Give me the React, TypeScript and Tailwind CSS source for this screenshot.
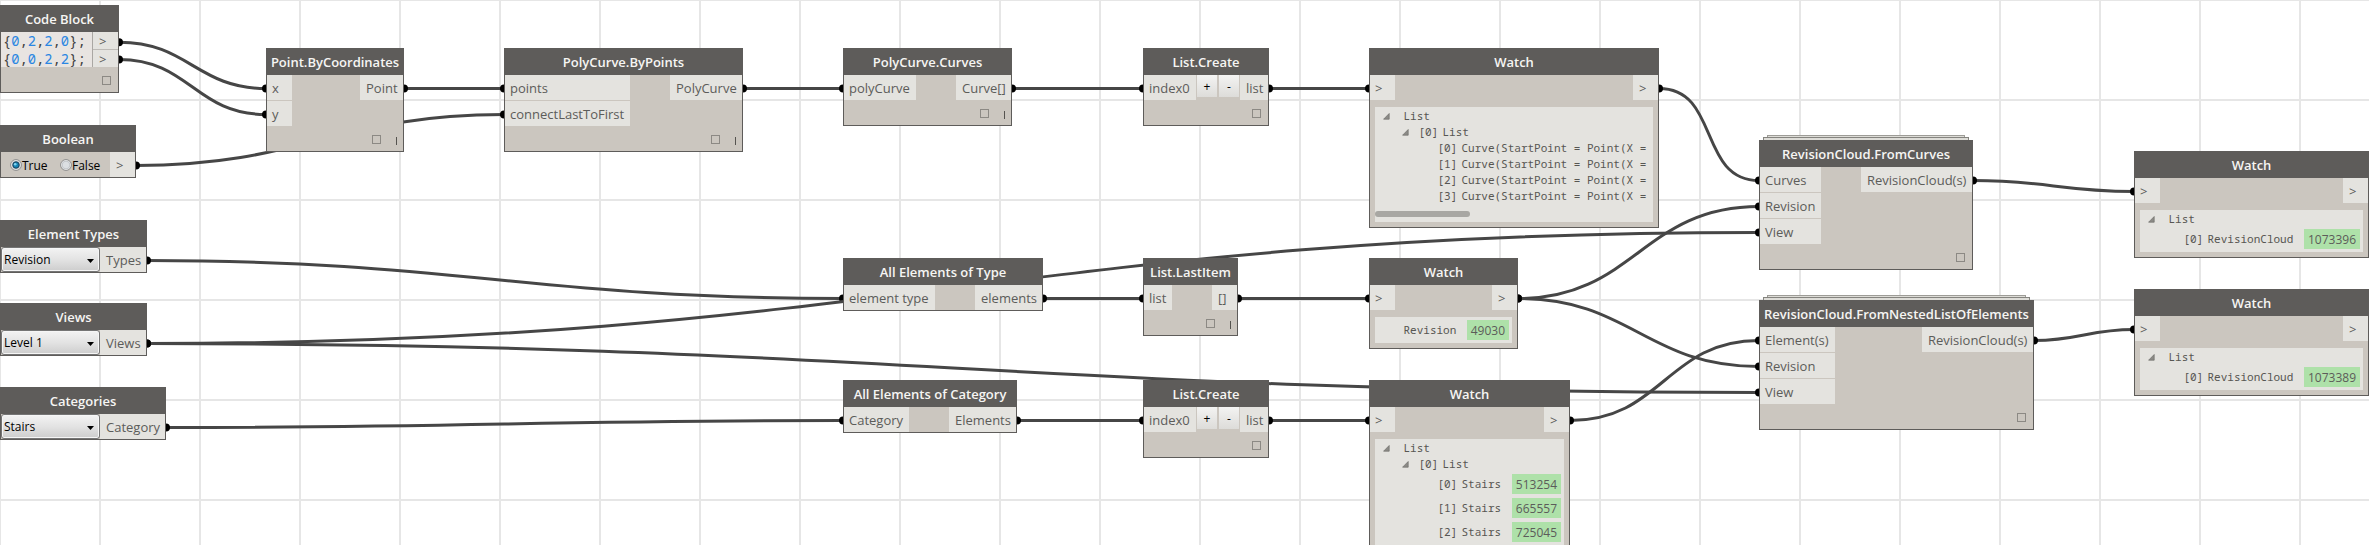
import type { ReactNode } from "react";

type Point = [number, number];

const WIRES: [Point, Point][] = [
  [[119, 42.2], [266, 88.5]],
  [[119, 59.4], [266, 114.5]],
  [[136, 165.5], [504, 114.5]],
  [[404, 88.5], [504, 88.5]],
  [[743, 88.5], [843, 88.5]],
  [[1012, 88.5], [1143, 88.5]],
  [[1269, 88.5], [1369, 88.5]],
  [[1659, 88.5], [1759, 180.5]],
  [[147, 260.5], [843, 298.5]],
  [[147, 343.5], [1759, 232.5]],
  [[147, 343.5], [1759, 392.5]],
  [[166, 427.5], [843, 420.5]],
  [[1043, 298.5], [1143, 298.5]],
  [[1238, 298.5], [1369, 298.5]],
  [[1518, 298.5], [1759, 206.5]],
  [[1518, 298.5], [1759, 366.5]],
  [[1017, 420.5], [1143, 420.5]],
  [[1269, 420.5], [1369, 420.5]],
  [[1570, 420.5], [1759, 340.5]],
  [[1973, 180.5], [2134, 191.5]],
  [[2034, 340.5], [2134, 329.5]],
];

function wirePath([[x1, y1], [x2, y2]]: [Point, Point]) {
  const o = 0.45 * Math.hypot(x2 - x1, y2 - y1);
  return `M${x1} ${y1}C${x1 + o} ${y1} ${x2 - o} ${y2} ${x2} ${y2}`;
}

function Wires() {
  return (
    <svg className="absolute left-0 top-0" width="2369" height="545" fill="none">
      {WIRES.map((w, i) => (
        <g key={i}>
          <path d={wirePath(w)} stroke="#464646" strokeWidth="3" />
          <circle cx={w[0][0]} cy={w[0][1]} r="4" fill="#000" />
          <circle cx={w[1][0]} cy={w[1][1]} r="4" fill="#000" />
        </g>
      ))}
    </svg>
  );
}

function Node({ at, title, stacked, children }: { at: string; title: string; stacked?: boolean; children: ReactNode }) {
  return (
    <section className={`absolute ${at}`}>
      {stacked && (
        <>
          <div className="absolute inset-x-2 -top-[5px] h-[5px] border border-b-0 border-[#9d9c97] bg-[#dddcd7]" />
          <div className="absolute inset-x-1 -top-[3px] h-[3px] border border-b-0 border-[#85847f] bg-[#dddcd7]" />
        </>
      )}
      <div className="relative flex flex-col border border-t-0 border-[#5e5c5a] bg-[#cbc6bf]">
        <h2 className="-mx-px flex h-[27px] items-center justify-center whitespace-nowrap bg-[#5e5c5a] pt-px text-[13px] font-semibold leading-[26px] text-[#f6f5f3]">
          {title}
        </h2>
        {children}
      </div>
    </section>
  );
}

function In({ w, children }: { w: string; children: ReactNode }) {
  return <div className={`h-[25px] whitespace-nowrap bg-[#e4e3df] pl-[5px] text-[13px] leading-[26px] text-[#5c5c5a] ${w}`}>{children}</div>;
}

function Out({ w, children }: { w: string; children: ReactNode }) {
  return <div className={`h-[25px] whitespace-nowrap bg-[#e4e3df] pl-[6px] text-[13px] leading-[26px] text-[#5c5c5a] ${w}`}>{children}</div>;
}

function Ports({ ins, inW, out, outW }: { ins: string[]; inW: string; out: string; outW: string }) {
  return (
    <div className="flex items-start justify-between">
      <div className="flex flex-col gap-px">
        {ins.map((name) => (
          <In key={name} w={inW}>{name}</In>
        ))}
      </div>
      <Out w={outW}>{out}</Out>
    </div>
  );
}

function Footer({ lacing }: { lacing?: boolean }) {
  return (
    <div className={`flex h-[25px] items-end justify-end pb-[7px] ${lacing ? "pr-[6px]" : "pr-[7px]"}`}>
      <div className="size-[9px] border border-[#8c8984]" />
      {lacing && <div className="-mb-px ml-[15px] h-2 w-px bg-[#55534f]" />}
    </div>
  );
}

function ListCreate({ at }: { at: string }) {
  const btn = "h-[22px] w-5 bg-linear-to-b from-[#f3f3f2] to-[#dddcd9] text-center text-[12px] leading-[24px] text-black";
  return (
    <Node at={at} title="List.Create">
      <div className="flex items-start">
        <In w="w-[52px]">index0</In>
        <button className={`${btn} ml-px`}>+</button>
        <button className={`${btn} ml-[2px]`}>-</button>
        <div className="ml-px">
          <Out w="w-[28px]">list</Out>
        </div>
      </div>
      <Footer />
    </Node>
  );
}

type Item = { level: 0 | 1 | 2; index?: number; label: string; open?: boolean; id?: string };

const INDENT = ["pl-[8px]", "pl-[27px]", "pl-[46px]"];

function TreeRow({ item }: { item: Item }) {
  return (
    <div className={`flex items-center pr-[3px] ${INDENT[item.level]} ${item.id ? "h-6" : "h-4"}`}>
      <div className="w-[7px] shrink-0">
        {item.open && (
          <svg width="7" height="7" viewBox="0 0 7 7" className="block">
            <path d="M6.2 .5V6.2H.6Z" fill="#8b8a86" stroke="#6f6e6a" strokeWidth=".7" />
          </svg>
        )}
      </div>
      {item.index !== undefined && <span className="-mr-[8px] ml-[9.5px] w-[32px] shrink-0">[{item.index}]</span>}
      <span className={item.index === undefined ? "ml-[13.5px] whitespace-pre" : "whitespace-pre"}>{item.label}</span>
      {item.id && (
        <span className="ml-auto h-5 bg-[#aee1a9] px-1 font-['Open_Sans',sans-serif] text-[12px] leading-[21px] text-[#5c5c5a]">{item.id}</span>
      )}
    </div>
  );
}

function Watch({ at, panel, items, scroll }: { at: string; panel: string; items: Item[]; scroll?: boolean }) {
  return (
    <Node at={at} title="Watch">
      <Ports ins={[">"]} inW="w-[25px]" out=">" outW="w-[25px]" />
      <div className={`mx-[5px] mb-[5px] mt-[7px] overflow-hidden bg-[#e4e3df] pt-px font-['Noto_Sans_Mono','DejaVu_Sans_Mono',monospace] text-[11px] leading-4 text-[#575652] ${panel}`}>
        {items.map((item, i) => (
          <TreeRow key={i} item={item} />
        ))}
        {scroll && <div className="mt-[7px] h-[6px] w-[95px] rounded-[3px] bg-[#a8a7a3]" />}
      </div>
    </Node>
  );
}

function Dropdown({ at, title, value, out, outW }: { at: string; title: string; value: string; out: string; outW: string }) {
  return (
    <Node at={at} title={title}>
      <div className="flex h-[25px] items-start">
        <div className="flex h-[25px] w-[99px] items-center justify-between rounded-[3px] border border-[#757575] bg-linear-to-b from-[#f3f3f3] via-[#e3e3e3] to-[#cdcdcd] pl-[2px] pr-[5px] text-[12px] leading-[21px] text-black shadow-[inset_0_0_0_1px_#f6f6f6]">
          <span className="-mt-px">{value}</span>
          <svg width="7" height="4" viewBox="0 0 7 4" className="mt-[2px] block">
            <path d="M0 0H7L3.5 4Z" fill="#000" />
          </svg>
        </div>
        <Out w={outW}>{out}</Out>
      </div>
    </Node>
  );
}

function Radio({ checked }: { checked?: boolean }) {
  return (
    <svg width="12" height="12" viewBox="0 0 12 12" className="block">
      <circle cx="6" cy="6" r="5.4" fill="#f4f4f4" stroke="#8a8a8a" strokeWidth="1" />
      <circle cx="6" cy="6" r="3.9" fill="#dcdfe2" stroke="#b9bdc2" strokeWidth=".8" />
      {checked && (
        <>
          <circle cx="6" cy="6" r="3.2" fill="#1583b4" stroke="#173f5c" strokeWidth="1" />
          <circle cx="5.2" cy="5.2" r="1.3" fill="#7fd3f0" />
        </>
      )}
    </svg>
  );
}

function CodeLine({ values }: { values: number[] }) {
  return (
    <div className="h-[17.5px] leading-[18px]">
      {"{"}
      {values.map((v, i) => (
        <span key={i}>
          {i > 0 && ","}
          <span className="text-[#2a86e2]">{v}</span>
        </span>
      ))}
      {"};"}
    </div>
  );
}

export default function App() {
  return (
    <main className="relative h-[545px] w-[2369px] overflow-hidden bg-white bg-[linear-gradient(to_right,#e6e6e6_1px,transparent_1px,transparent_99px,#e6e6e6_99px),linear-gradient(to_bottom,#e6e6e6_1px,transparent_1px,transparent_99px,#e6e6e6_99px)] bg-[length:100px_100px] font-['Open_Sans',sans-serif]">
      <Wires />

      <Node at="left-0 top-[5px] w-[119px]" title="Code Block">
        <div className="flex h-[35px]">
          <div className="w-[91px] whitespace-pre bg-[#e8e4e1] pl-[2px] font-['Noto_Sans_Mono','DejaVu_Sans_Mono',monospace] text-[13.75px] text-[#404040]">
            <CodeLine values={[0, 2, 2, 0]} />
            <CodeLine values={[0, 0, 2, 2]} />
          </div>
          <div className="flex flex-1 flex-col gap-px border-l border-[#aaa7a3] bg-[#bdbab6]">
            <div className="h-[17px] bg-[#e4e3df] pl-[6px] text-[13px] leading-[18px] text-[#5c5c5a]">&gt;</div>
            <div className="h-[17px] bg-[#e4e3df] pl-[6px] text-[13px] leading-[18px] text-[#5c5c5a]">&gt;</div>
          </div>
        </div>
        <Footer />
      </Node>

      <Node at="left-0 top-[125px] w-[136px]" title="Boolean">
        <div className="flex h-[25px] items-center text-[12px] leading-[25px] text-black">
          <div className="ml-[9px] flex w-[50px] items-center">
            <Radio checked />
            <span className="pt-[2px]">True</span>
          </div>
          <div className="flex flex-1 items-center">
            <Radio />
            <span className="pt-[2px]">False</span>
          </div>
          <Out w="w-[25px]">&gt;</Out>
        </div>
      </Node>

      <Dropdown at="left-0 top-[220px] w-[147px]" title="Element Types" value="Revision" out="Types" outW="w-[46px]" />
      <Dropdown at="left-0 top-[303px] w-[147px]" title="Views" value="Level 1" out="Views" outW="w-[46px]" />
      <Dropdown at="left-0 top-[387px] w-[166px]" title="Categories" value="Stairs" out="Category" outW="w-[65px]" />

      <Node at="left-[266px] top-[48px] w-[138px]" title="Point.ByCoordinates">
        <Ports ins={["x", "y"]} inW="w-[25px]" out="Point" outW="w-[43px]" />
        <Footer lacing />
      </Node>

      <Node at="left-[504px] top-[48px] w-[239px]" title="PolyCurve.ByPoints">
        <Ports ins={["points", "connectLastToFirst"]} inW="w-[125px]" out="PolyCurve" outW="w-[72px]" />
        <Footer lacing />
      </Node>

      <Node at="left-[843px] top-[48px] w-[169px]" title="PolyCurve.Curves">
        <Ports ins={["polyCurve"]} inW="w-[72px]" out="Curve[]" outW="w-[55px]" />
        <Footer lacing />
      </Node>

      <ListCreate at="left-[1143px] top-[48px] w-[126px]" />

      <Watch
        at="left-[1369px] top-[48px] w-[290px]"
        panel="h-[115px]"
        scroll
        items={[
          { level: 0, label: "List", open: true },
          { level: 1, index: 0, label: "List", open: true },
          { level: 2, index: 0, label: "Curve(StartPoint = Point(X =" },
          { level: 2, index: 1, label: "Curve(StartPoint = Point(X =" },
          { level: 2, index: 2, label: "Curve(StartPoint = Point(X =" },
          { level: 2, index: 3, label: "Curve(StartPoint = Point(X =" },
        ]}
      />

      <Node at="left-[843px] top-[258px] w-[200px]" title="All Elements of Type">
        <Ports ins={["element type"]} inW="w-[91px]" out="elements" outW="w-[67px]" />
      </Node>

      <Node at="left-[1143px] top-[258px] w-[95px]" title="List.LastItem">
        <Ports ins={["list"]} inW="w-[28px]" out="[]" outW="w-[25px]" />
        <Footer lacing />
      </Node>

      <Watch at="left-[1369px] top-[258px] w-[149px]" panel="h-[26px]" items={[{ level: 0, label: "Revision", id: "49030" }]} />

      <Node at="left-[843px] top-[380px] w-[174px]" title="All Elements of Category">
        <Ports ins={["Category"]} inW="w-[65px]" out="Elements" outW="w-[67px]" />
      </Node>

      <ListCreate at="left-[1143px] top-[380px] w-[126px]" />

      <Watch
        at="left-[1369px] top-[380px] w-[201px]"
        panel="h-[125px]"
        items={[
          { level: 0, label: "List", open: true },
          { level: 1, index: 0, label: "List", open: true },
          { level: 2, index: 0, label: "Stairs", id: "513254" },
          { level: 2, index: 1, label: "Stairs", id: "665557" },
          { level: 2, index: 2, label: "Stairs", id: "725045" },
        ]}
      />

      <Node at="left-[1759px] top-[140px] w-[214px]" title="RevisionCloud.FromCurves" stacked>
        <Ports ins={["Curves", "Revision", "View"]} inW="w-[61px]" out="RevisionCloud(s)" outW="w-[111px]" />
        <Footer />
      </Node>

      <Node at="left-[1759px] top-[300px] w-[275px]" title="RevisionCloud.FromNestedListOfElements" stacked>
        <Ports ins={["Element(s)", "Revision", "View"]} inW="w-[75px]" out="RevisionCloud(s)" outW="w-[111px]" />
        <Footer />
      </Node>

      <Watch
        at="left-[2134px] top-[151px] w-[235px]"
        panel="h-[42px]"
        items={[
          { level: 0, label: "List", open: true },
          { level: 1, index: 0, label: "RevisionCloud", id: "1073396" },
        ]}
      />
      <Watch
        at="left-[2134px] top-[289px] w-[235px]"
        panel="h-[42px]"
        items={[
          { level: 0, label: "List", open: true },
          { level: 1, index: 0, label: "RevisionCloud", id: "1073389" },
        ]}
      />
    </main>
  );
}
